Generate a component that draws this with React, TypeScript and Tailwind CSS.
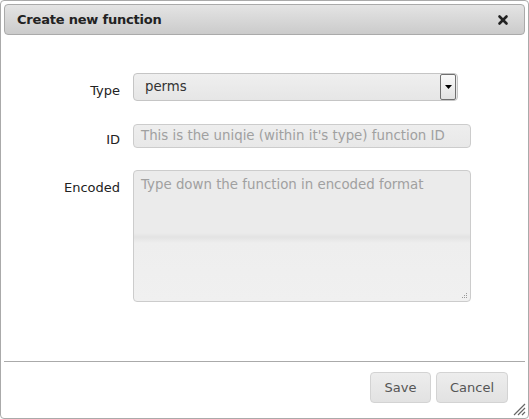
import { X } from 'lucide-react';

const font = { fontFamily: '"DejaVu Sans", Verdana, sans-serif' };

export default function App() {
  return (
    <div className="w-[529px] h-[419px] bg-white" style={font}>
      <div className="relative flex flex-col w-full h-full border border-[#aaaaaa] rounded-[4px] p-[3px] bg-white">
        {/* titlebar */}
        <div className="flex items-center justify-between h-[31px] border border-[#aaaaaa] rounded-[4px] bg-[linear-gradient(#e4e4e4,#cbcbcb)] pl-[12px] pr-[14px]">
          <span className="text-[13px] font-bold text-[#222222] tracking-[-0.2px]">Create new function</span>
          <X size={14} strokeWidth={4.5} className="text-[#222222]" />
        </div>

        {/* form */}
        <div className="flex-1 grid grid-cols-[116px_1fr] gap-x-[13px] content-start pt-[38px] text-[13px] text-[#222222]">
          <label className="self-center text-right pt-[7px]">Type</label>
          <div className="w-[325px] h-[28px] flex items-center justify-between border border-[#c5c5c5] rounded-[4px] bg-[linear-gradient(#efefef,#e6e6e6)] pl-[11px] pr-[1px]">
            <span className="text-[#333333] text-[13.3px]">perms</span>
            <div className="w-[16px] h-[26px] flex items-center justify-center border border-[#707070] rounded-[2px] bg-[linear-gradient(#fafafa,#e2e2e2)]">
              <svg width="7" height="4" viewBox="0 0 7 4">
                <path d="M0 0h7L3.5 4z" fill="#000" />
              </svg>
            </div>
          </div>

          <label className="self-center text-right mt-[23px] pt-[6px]">ID</label>
          <div className="self-start mt-[23px] w-[338px] h-[24px] flex items-center border border-[#cccccc] rounded-[4px] bg-[linear-gradient(#eeeeee,#e8e8e8)] px-[7px]">
            <span className="text-[#a0a0a0] text-[13.35px]">This is the uniqie (within it's type) function ID</span>
          </div>

          <label className="text-right mt-[20px] pt-[8px]">Encoded</label>
          <div className="relative mt-[20px] w-[338px] h-[132px] border border-[#cccccc] rounded-[4px] bg-[linear-gradient(#ebebeb_0px,#ebebeb_62px,#e3e3e3_66px,#eeeeee_72px,#f0f0f0_100%)] px-[7px] pt-[4px]">
            <span className="text-[#a0a0a0] text-[13.35px]">Type down the function in encoded format</span>
            <svg className="absolute right-[2px] bottom-[2px]" width="7" height="7" viewBox="0 0 7 7">
              <rect x="5" y="1" width="1" height="1" fill="#999" />
              <rect x="3" y="3" width="1" height="1" fill="#999" />
              <rect x="5" y="3" width="1" height="1" fill="#999" />
              <rect x="1" y="5" width="1" height="1" fill="#999" />
              <rect x="3" y="5" width="1" height="1" fill="#999" />
              <rect x="5" y="5" width="1" height="1" fill="#999" />
            </svg>
          </div>
        </div>

        {/* buttonpane */}
        <div className="border-t border-[#aaaaaa] flex justify-end gap-[5px] pt-[10px] pb-[12px] pr-[17px]">
          <button className="w-[61px] h-[31px] border border-[#d3d3d3] rounded-[4px] bg-[linear-gradient(#ededed,#e2e2e2)] text-[13px] text-[#555555]">
            Save
          </button>
          <button className="w-[72px] h-[31px] border border-[#d3d3d3] rounded-[4px] bg-[linear-gradient(#ededed,#e2e2e2)] text-[13px] text-[#555555]">
            Cancel
          </button>
        </div>

        <svg className="absolute right-[2px] bottom-[2px]" width="13" height="13" viewBox="0 0 13 13">
          <path d="M12 1L1 12M12 5L5 12M12 9L9 12" stroke="#666" strokeWidth="1.2" />
        </svg>
      </div>
    </div>
  );
}
